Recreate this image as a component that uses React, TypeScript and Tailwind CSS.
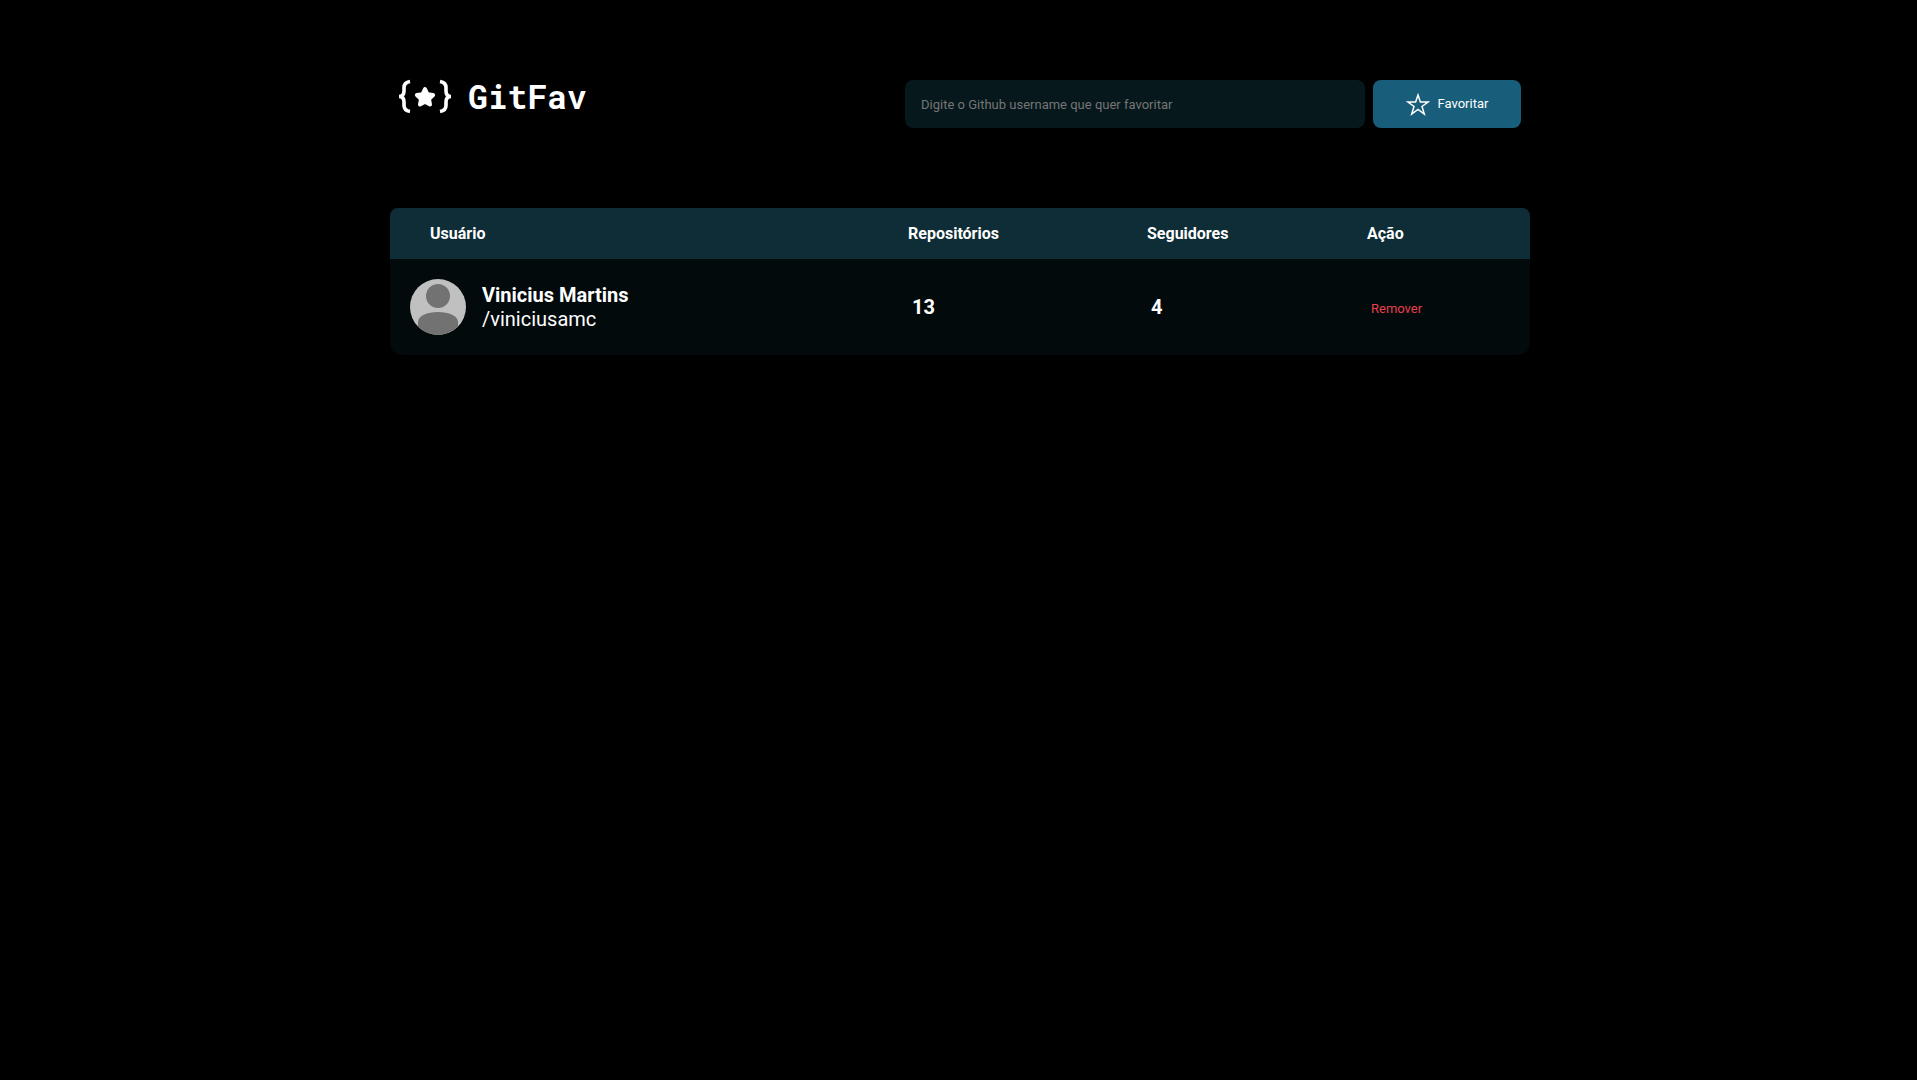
const favorites = [
  { name: 'Vinicius Martins', login: 'viniciusamc', repositories: 13, followers: 4 },
];

function Logo() {
  return (
    <h1 className="flex h-8 items-center gap-4">
      <svg width="54" height="36" viewBox="0 0 54 36" fill="none" aria-hidden="true">
        <path
          d="M12 3.500C7.500 4.300 6 6.500 6 9.500v3.500c0 3-1.300 5.500-5 5.500 3.700 0 5 2.500 5 5.500v3.500c0 3 1.500 5.200 6 6M42 3.500c4.500.8 6 3 6 6v3.500c0 3 1.300 5.500 5 5.500-3.700 0-5 2.500-5 5.500v3.500c0 3-1.500 5.200-6 6"
          stroke="white"
          strokeWidth="3.600"
        />
        <path
          d="M27 11l2.500 5.300 5.600.7-4.100 4 1 5.500-5-2.700-5 2.700 1-5.500-4.100-4 5.600-.7z"
          fill="white"
          stroke="white"
          strokeWidth="4"
          strokeLinejoin="round"
        />
      </svg>
      <span className="font-['Roboto_Mono','DejaVu_Sans_Mono',monospace] text-[33px] leading-8 font-bold">
        GitFav
      </span>
    </h1>
  );
}

function StarIcon() {
  return (
    <svg width="24" height="24" viewBox="0 0 24 24" fill="none" stroke="currentColor" strokeWidth="1.500" aria-hidden="true">
      <path d="M12 3l2.400 7H22l-6 4.500 2.300 7.500L12 17.500 5.700 22 8 14.500 2 10h7.600z" />
    </svg>
  );
}

function Avatar({ label }: { label: string }) {
  return (
    <svg className="size-14 shrink-0 rounded-full" viewBox="0 0 56 56" role="img" aria-label={label}>
      <rect width="56" height="56" fill="#c0c0c0" />
      <circle cx="28" cy="17" r="12" fill="#727272" />
      <path d="M8 56V43c0-6 9-10 20-10s20 4 20 10v13z" fill="#727272" />
    </svg>
  );
}

export default function App() {
  return (
    <div className="min-h-screen bg-black pt-20 pl-[3px] font-['Roboto',sans-serif] text-white">
      <div className="mx-auto max-w-[1140px]">
        <header className="flex items-start justify-between pr-[9px] pl-2">
          <Logo />
          <form className="flex gap-2" onSubmit={(e) => e.preventDefault()}>
            <input
              id="username"
              type="text"
              aria-label="Github username"
              placeholder="Digite o Github username que quer favoritar"
              className="h-12 w-[460px] rounded-lg bg-[#06181c] px-4 text-[13px] text-white placeholder:text-[#757575]"
            />
            <button type="submit" className="flex h-12 w-[148px] items-center justify-center gap-2 rounded-lg bg-[#185d79] text-[13px]">
              <StarIcon />
              Favoritar
            </button>
          </form>
        </header>

        <main className="mt-20 overflow-hidden rounded-t-lg rounded-b-xl bg-[#020a0c]">
          <table className="w-full table-fixed text-left">
            <thead className="bg-[#0e2d36]">
              <tr className="h-[51px]">
                <th className="pl-10 font-bold">Usuário</th>
                <th className="w-[239px] pl-4 font-bold">Repositórios</th>
                <th className="w-[220px] pl-4 font-bold">Seguidores</th>
                <th className="w-[179px] pl-4 font-bold">Ação</th>
              </tr>
            </thead>
            <tbody className="text-xl leading-6">
              {favorites.map((user) => (
                <tr key={user.login}>
                  <td className="p-5">
                    <div className="flex items-center gap-4">
                      <Avatar label={`Imagem de ${user.name}`} />
                      <a href={`#${user.login}`}>
                        <p className="font-bold">{user.name}</p>
                        <span className="block">/{user.login}</span>
                      </a>
                    </div>
                  </td>
                  <td className="pl-5 font-bold">{user.repositories}</td>
                  <td className="pl-5 font-bold">{user.followers}</td>
                  <td className="pl-5">
                    <button type="button" className="text-[13px] text-[#e83f4b]">Remover</button>
                  </td>
                </tr>
              ))}
            </tbody>
          </table>
        </main>
      </div>
    </div>
  );
}
